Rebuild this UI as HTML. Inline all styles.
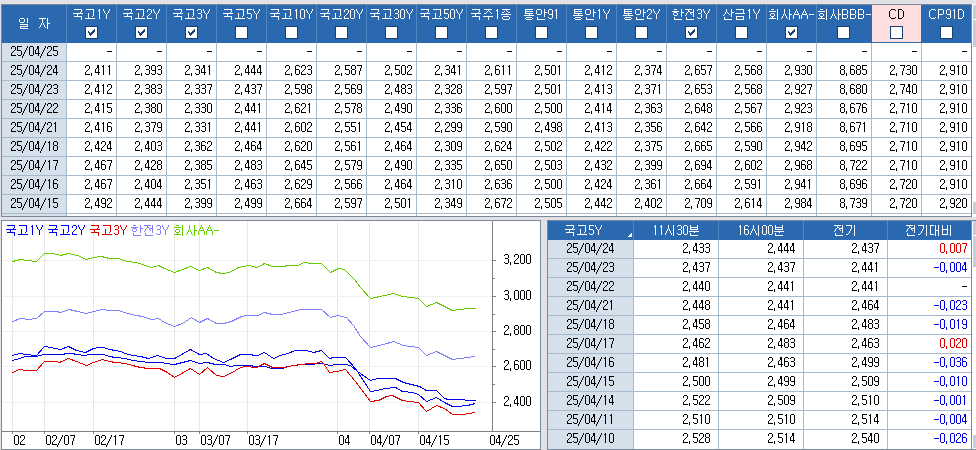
<!DOCTYPE html>
<html><head><meta charset="utf-8"><style>
html,body{margin:0;padding:0;width:976px;height:450px;overflow:hidden;background:#e2e2e6;}
body{position:relative;font-family:"Liberation Sans",sans-serif;}
body>div{position:absolute;}
.c{position:absolute;left:0;top:0;will-change:transform;}
.c b{position:absolute;font-weight:normal;font-size:14px;line-height:14px;text-align:center;white-space:nowrap;}
.c i{position:absolute;width:5px;height:1px;background:currentColor;}
</style></head><body>
<div style="left:1px;top:4px;width:971px;height:213px;background:#7b8a9a;"></div><div style="left:2px;top:5px;width:969px;height:211px;background:#ffffff;"></div><div style="left:2px;top:5px;width:969px;height:38px;background:#2a69b0;"></div><div style="left:2px;top:43px;width:64px;height:173px;background:#d6e0ea;"></div><div style="left:872px;top:5px;width:49px;height:37px;background:#fedfdf;"></div><div style="left:66px;top:5px;width:1px;height:38px;background:#5387c2;"></div><div style="left:116px;top:5px;width:1px;height:38px;background:#5387c2;"></div><div style="left:166px;top:5px;width:1px;height:38px;background:#5387c2;"></div><div style="left:216px;top:5px;width:1px;height:38px;background:#5387c2;"></div><div style="left:266px;top:5px;width:1px;height:38px;background:#5387c2;"></div><div style="left:316px;top:5px;width:1px;height:38px;background:#5387c2;"></div><div style="left:366px;top:5px;width:1px;height:38px;background:#5387c2;"></div><div style="left:416px;top:5px;width:1px;height:38px;background:#5387c2;"></div><div style="left:466px;top:5px;width:1px;height:38px;background:#5387c2;"></div><div style="left:516px;top:5px;width:1px;height:38px;background:#5387c2;"></div><div style="left:566px;top:5px;width:1px;height:38px;background:#5387c2;"></div><div style="left:616px;top:5px;width:1px;height:38px;background:#5387c2;"></div><div style="left:666px;top:5px;width:1px;height:38px;background:#5387c2;"></div><div style="left:716px;top:5px;width:1px;height:38px;background:#5387c2;"></div><div style="left:766px;top:5px;width:1px;height:38px;background:#5387c2;"></div><div style="left:816px;top:5px;width:1px;height:38px;background:#5387c2;"></div><div style="left:66px;top:43px;width:1px;height:173px;background:#a8bbcd;"></div><div style="left:116px;top:43px;width:1px;height:173px;background:#a8bbcd;"></div><div style="left:166px;top:43px;width:1px;height:173px;background:#a8bbcd;"></div><div style="left:216px;top:43px;width:1px;height:173px;background:#a8bbcd;"></div><div style="left:266px;top:43px;width:1px;height:173px;background:#a8bbcd;"></div><div style="left:316px;top:43px;width:1px;height:173px;background:#a8bbcd;"></div><div style="left:366px;top:43px;width:1px;height:173px;background:#a8bbcd;"></div><div style="left:416px;top:43px;width:1px;height:173px;background:#a8bbcd;"></div><div style="left:466px;top:43px;width:1px;height:173px;background:#a8bbcd;"></div><div style="left:516px;top:43px;width:1px;height:173px;background:#a8bbcd;"></div><div style="left:566px;top:43px;width:1px;height:173px;background:#a8bbcd;"></div><div style="left:616px;top:43px;width:1px;height:173px;background:#a8bbcd;"></div><div style="left:666px;top:43px;width:1px;height:173px;background:#a8bbcd;"></div><div style="left:716px;top:43px;width:1px;height:173px;background:#a8bbcd;"></div><div style="left:766px;top:43px;width:1px;height:173px;background:#a8bbcd;"></div><div style="left:816px;top:43px;width:1px;height:173px;background:#a8bbcd;"></div><div style="left:871px;top:43px;width:1px;height:173px;background:#a8bbcd;"></div><div style="left:921px;top:43px;width:1px;height:173px;background:#a8bbcd;"></div><div style="left:2px;top:61px;width:969px;height:1px;background:#a8bbcd;"></div><div style="left:2px;top:80px;width:969px;height:1px;background:#a8bbcd;"></div><div style="left:2px;top:99px;width:969px;height:1px;background:#a8bbcd;"></div><div style="left:2px;top:118px;width:969px;height:1px;background:#a8bbcd;"></div><div style="left:2px;top:137px;width:969px;height:1px;background:#a8bbcd;"></div><div style="left:2px;top:156px;width:969px;height:1px;background:#a8bbcd;"></div><div style="left:2px;top:175px;width:969px;height:1px;background:#a8bbcd;"></div><div style="left:2px;top:194px;width:969px;height:1px;background:#a8bbcd;"></div><div style="left:2px;top:213px;width:969px;height:1px;background:#a8bbcd;"></div><div style="left:85px;top:26px;width:11px;height:11px;border:1px solid #163f73;background:#fff"></div><svg style="position:absolute;left:85px;top:26px" width="13" height="13" shape-rendering="crispEdges"><path d="M3 5h1v2h-1zM4 6h1v3h-1zM5 7h1v3h-1zM6 6h1v3h-1zM7 5h1v3h-1zM8 4h1v3h-1zM9 3h1v3h-1z" fill="#163f73"/></svg><div style="left:135px;top:26px;width:11px;height:11px;border:1px solid #163f73;background:#fff"></div><svg style="position:absolute;left:135px;top:26px" width="13" height="13" shape-rendering="crispEdges"><path d="M3 5h1v2h-1zM4 6h1v3h-1zM5 7h1v3h-1zM6 6h1v3h-1zM7 5h1v3h-1zM8 4h1v3h-1zM9 3h1v3h-1z" fill="#163f73"/></svg><div style="left:185px;top:26px;width:11px;height:11px;border:1px solid #163f73;background:#fff"></div><svg style="position:absolute;left:185px;top:26px" width="13" height="13" shape-rendering="crispEdges"><path d="M3 5h1v2h-1zM4 6h1v3h-1zM5 7h1v3h-1zM6 6h1v3h-1zM7 5h1v3h-1zM8 4h1v3h-1zM9 3h1v3h-1z" fill="#163f73"/></svg><div style="left:235px;top:26px;width:11px;height:11px;border:1px solid #163f73;background:#fff"></div><div style="left:285px;top:26px;width:11px;height:11px;border:1px solid #163f73;background:#fff"></div><div style="left:335px;top:26px;width:11px;height:11px;border:1px solid #163f73;background:#fff"></div><div style="left:385px;top:26px;width:11px;height:11px;border:1px solid #163f73;background:#fff"></div><div style="left:435px;top:26px;width:11px;height:11px;border:1px solid #163f73;background:#fff"></div><div style="left:485px;top:26px;width:11px;height:11px;border:1px solid #163f73;background:#fff"></div><div style="left:535px;top:26px;width:11px;height:11px;border:1px solid #163f73;background:#fff"></div><div style="left:585px;top:26px;width:11px;height:11px;border:1px solid #163f73;background:#fff"></div><div style="left:635px;top:26px;width:11px;height:11px;border:1px solid #163f73;background:#fff"></div><div style="left:685px;top:26px;width:11px;height:11px;border:1px solid #163f73;background:#fff"></div><svg style="position:absolute;left:685px;top:26px" width="13" height="13" shape-rendering="crispEdges"><path d="M3 5h1v2h-1zM4 6h1v3h-1zM5 7h1v3h-1zM6 6h1v3h-1zM7 5h1v3h-1zM8 4h1v3h-1zM9 3h1v3h-1z" fill="#163f73"/></svg><div style="left:735px;top:26px;width:11px;height:11px;border:1px solid #163f73;background:#fff"></div><div style="left:785px;top:26px;width:11px;height:11px;border:1px solid #163f73;background:#fff"></div><svg style="position:absolute;left:785px;top:26px" width="13" height="13" shape-rendering="crispEdges"><path d="M3 5h1v2h-1zM4 6h1v3h-1zM5 7h1v3h-1zM6 6h1v3h-1zM7 5h1v3h-1zM8 4h1v3h-1zM9 3h1v3h-1z" fill="#163f73"/></svg><div style="left:837px;top:26px;width:11px;height:11px;border:1px solid #163f73;background:#fff"></div><div style="left:890px;top:26px;width:11px;height:11px;border:1px solid #163f73;background:#fff"></div><div style="left:940px;top:26px;width:11px;height:11px;border:1px solid #163f73;background:#fff"></div><svg style="position:absolute;left:0;top:0" width="976" height="450" shape-rendering="crispEdges"><path fill="#fff" d="M20 18h4v1h-4zM19 19h1v3h-1zM24 19h1v3h-1zM20 22h4v1h-4zM27 18h1v5h-1zM20 24h8v1h-8zM27 25h1v1h-1zM20 26h8v1h-8zM20 27h1v1h-1zM20 28h8v1h-8zM39 18h7v1h-7zM42 19h1v3h-1zM42 22h1v1h-1zM41 23h1v1h-1zM41 24h1v1h-1zM40 25h1v1h-1zM40 26h1v1h-1zM39 27h1v1h-1zM43 23h1v1h-1zM43 24h1v1h-1zM44 25h1v1h-1zM44 26h1v1h-1zM45 27h1v1h-1zM47 18h1v11h-1zM48 23h2v1h-2zM74 9h8v1h-8zM81 10h1v2h-1zM80 12h1v1h-1zM73 13h10v1h-10zM77 14h1v2h-1zM74 16h8v1h-8zM81 17h1v3h-1zM86 9h8v1h-8zM93 10h1v6h-1zM92 16h1v1h-1zM88 13h1v5h-1zM85 18h10v1h-10zM124 9h8v1h-8zM131 10h1v2h-1zM130 12h1v1h-1zM123 13h10v1h-10zM127 14h1v2h-1zM124 16h8v1h-8zM131 17h1v3h-1zM136 9h8v1h-8zM143 10h1v6h-1zM142 16h1v1h-1zM138 13h1v5h-1zM135 18h10v1h-10zM174 9h8v1h-8zM181 10h1v2h-1zM180 12h1v1h-1zM173 13h10v1h-10zM177 14h1v2h-1zM174 16h8v1h-8zM181 17h1v3h-1zM186 9h8v1h-8zM193 10h1v6h-1zM192 16h1v1h-1zM188 13h1v5h-1zM185 18h10v1h-10zM224 9h8v1h-8zM231 10h1v2h-1zM230 12h1v1h-1zM223 13h10v1h-10zM227 14h1v2h-1zM224 16h8v1h-8zM231 17h1v3h-1zM236 9h8v1h-8zM243 10h1v6h-1zM242 16h1v1h-1zM238 13h1v5h-1zM235 18h10v1h-10zM271 9h8v1h-8zM278 10h1v2h-1zM277 12h1v1h-1zM270 13h10v1h-10zM274 14h1v2h-1zM271 16h8v1h-8zM278 17h1v3h-1zM283 9h8v1h-8zM290 10h1v6h-1zM289 16h1v1h-1zM285 13h1v5h-1zM282 18h10v1h-10zM321 9h8v1h-8zM328 10h1v2h-1zM327 12h1v1h-1zM320 13h10v1h-10zM324 14h1v2h-1zM321 16h8v1h-8zM328 17h1v3h-1zM333 9h8v1h-8zM340 10h1v6h-1zM339 16h1v1h-1zM335 13h1v5h-1zM332 18h10v1h-10zM371 9h8v1h-8zM378 10h1v2h-1zM377 12h1v1h-1zM370 13h10v1h-10zM374 14h1v2h-1zM371 16h8v1h-8zM378 17h1v3h-1zM383 9h8v1h-8zM390 10h1v6h-1zM389 16h1v1h-1zM385 13h1v5h-1zM382 18h10v1h-10zM421 9h8v1h-8zM428 10h1v2h-1zM427 12h1v1h-1zM420 13h10v1h-10zM424 14h1v2h-1zM421 16h8v1h-8zM428 17h1v3h-1zM433 9h8v1h-8zM440 10h1v6h-1zM439 16h1v1h-1zM435 13h1v5h-1zM432 18h10v1h-10zM472 9h8v1h-8zM479 10h1v2h-1zM478 12h1v1h-1zM471 13h10v1h-10zM475 14h1v2h-1zM472 16h8v1h-8zM479 17h1v3h-1zM484 9h8v1h-8zM488 10h1v1h-1zM487 11h1v1h-1zM486 12h1v1h-1zM485 13h1v1h-1zM484 13h1v1h-1zM489 11h1v1h-1zM490 12h1v1h-1zM491 13h1v1h-1zM483 16h10v1h-10zM488 17h1v3h-1zM502 9h8v1h-8zM506 10h1v1h-1zM504 11h1v1h-1zM503 12h1v1h-1zM502 12h1v1h-1zM507 11h1v1h-1zM508 12h1v1h-1zM509 12h1v1h-1zM506 13h1v1h-1zM501 14h10v1h-10zM503 16h6v1h-6zM502 17h1v2h-1zM509 17h1v2h-1zM503 19h6v1h-6zM525 9h8v1h-8zM525 10h1v4h-1zM526 11h7v1h-7zM526 13h7v1h-7zM529 14h1v1h-1zM524 15h10v1h-10zM526 17h6v1h-6zM525 18h1v1h-1zM532 18h1v1h-1zM526 19h6v1h-6zM537 9h4v1h-4zM536 10h1v4h-1zM541 10h1v4h-1zM537 14h4v1h-4zM544 9h1v8h-1zM545 12h2v1h-2zM537 17h1v2h-1zM537 19h8v1h-8zM574 9h8v1h-8zM574 10h1v4h-1zM575 11h7v1h-7zM575 13h7v1h-7zM578 14h1v1h-1zM573 15h10v1h-10zM575 17h6v1h-6zM574 18h1v1h-1zM581 18h1v1h-1zM575 19h6v1h-6zM586 9h4v1h-4zM585 10h1v4h-1zM590 10h1v4h-1zM586 14h4v1h-4zM593 9h1v8h-1zM594 12h2v1h-2zM586 17h1v2h-1zM586 19h8v1h-8zM624 9h8v1h-8zM624 10h1v4h-1zM625 11h7v1h-7zM625 13h7v1h-7zM628 14h1v1h-1zM623 15h10v1h-10zM625 17h6v1h-6zM624 18h1v1h-1zM631 18h1v1h-1zM625 19h6v1h-6zM636 9h4v1h-4zM635 10h1v4h-1zM640 10h1v4h-1zM636 14h4v1h-4zM643 9h1v8h-1zM644 12h2v1h-2zM636 17h1v2h-1zM636 19h8v1h-8zM674 9h3v1h-3zM672 11h7v1h-7zM674 12h3v1h-3zM673 13h1v2h-1zM677 13h1v2h-1zM674 15h3v1h-3zM681 9h1v8h-1zM682 12h2v1h-2zM674 17h1v2h-1zM674 19h8v1h-8zM685 9h7v1h-7zM688 10h1v1h-1zM688 11h1v1h-1zM687 12h1v1h-1zM686 13h1v1h-1zM686 14h1v1h-1zM685 15h1v1h-1zM689 11h1v1h-1zM690 12h1v1h-1zM690 13h1v1h-1zM691 14h1v1h-1zM693 9h1v8h-1zM691 12h2v1h-2zM686 17h1v2h-1zM686 19h8v1h-8zM726 9h1v3h-1zM725 12h1v1h-1zM725 13h1v1h-1zM724 14h1v1h-1zM723 15h1v1h-1zM727 12h1v1h-1zM728 13h1v1h-1zM729 14h1v1h-1zM731 9h1v8h-1zM732 12h2v1h-2zM724 17h1v2h-1zM724 19h8v1h-8zM736 9h8v1h-8zM743 10h1v3h-1zM735 13h10v1h-10zM736 16h8v1h-8zM736 17h1v2h-1zM743 17h1v2h-1zM736 19h8v1h-8zM771 9h3v1h-3zM769 11h7v1h-7zM771 13h3v1h-3zM770 14h1v2h-1zM774 14h1v2h-1zM771 16h3v1h-3zM772 17h1v1h-1zM769 18h7v1h-7zM777 9h1v11h-1zM784 9h1v5h-1zM783 14h1v1h-1zM783 15h1v1h-1zM782 16h1v1h-1zM782 17h1v1h-1zM781 18h1v1h-1zM785 14h1v1h-1zM785 15h1v1h-1zM786 16h1v1h-1zM786 17h1v1h-1zM787 18h1v1h-1zM789 9h1v11h-1zM790 14h2v1h-2zM820 9h3v1h-3zM818 11h7v1h-7zM820 13h3v1h-3zM819 14h1v2h-1zM823 14h1v2h-1zM820 16h3v1h-3zM821 17h1v1h-1zM818 18h7v1h-7zM826 9h1v11h-1zM833 9h1v5h-1zM832 14h1v1h-1zM832 15h1v1h-1zM831 16h1v1h-1zM831 17h1v1h-1zM830 18h1v1h-1zM834 14h1v1h-1zM834 15h1v1h-1zM835 16h1v1h-1zM835 17h1v1h-1zM836 18h1v1h-1zM838 9h1v11h-1zM839 14h2v1h-2z"/></svg><div style="left:972px;top:4px;width:4px;height:213px;background:#ffffff;"></div><div style="left:973px;top:5px;width:3px;height:14px;background:#c5cfdb;"></div><div style="left:973px;top:20px;width:3px;height:27px;background:#c5cfdb;"></div><div style="left:973px;top:202px;width:3px;height:12px;background:#c5cfdb;"></div><div style="left:1px;top:220px;width:540px;height:230px;background:#7b8a9a;"></div><div style="left:2px;top:221px;width:538px;height:228px;background:#ffffff;"></div><svg style="position:absolute;left:0;top:0" width="976" height="450" shape-rendering="crispEdges"><line x1="12.5" y1="221" x2="12.5" y2="431" stroke="#e8e8e8" stroke-width="1"/><line x1="44.5" y1="221" x2="44.5" y2="431" stroke="#e8e8e8" stroke-width="1"/><line x1="93.5" y1="221" x2="93.5" y2="431" stroke="#e8e8e8" stroke-width="1"/><line x1="174.5" y1="221" x2="174.5" y2="431" stroke="#e8e8e8" stroke-width="1"/><line x1="199.5" y1="221" x2="199.5" y2="431" stroke="#e8e8e8" stroke-width="1"/><line x1="247.5" y1="221" x2="247.5" y2="431" stroke="#e8e8e8" stroke-width="1"/><line x1="337.5" y1="221" x2="337.5" y2="431" stroke="#e8e8e8" stroke-width="1"/><line x1="369.5" y1="221" x2="369.5" y2="431" stroke="#e8e8e8" stroke-width="1"/><line x1="418.5" y1="221" x2="418.5" y2="431" stroke="#e8e8e8" stroke-width="1"/><line x1="3" y1="260.5" x2="492" y2="260.5" stroke="#e2e2e2" stroke-width="1" stroke-dasharray="1 1"/><line x1="3" y1="296.5" x2="492" y2="296.5" stroke="#e2e2e2" stroke-width="1" stroke-dasharray="1 1"/><line x1="3" y1="331.5" x2="492" y2="331.5" stroke="#e2e2e2" stroke-width="1" stroke-dasharray="1 1"/><line x1="3" y1="366.5" x2="492" y2="366.5" stroke="#e2e2e2" stroke-width="1" stroke-dasharray="1 1"/><line x1="3" y1="402.5" x2="492" y2="402.5" stroke="#e2e2e2" stroke-width="1" stroke-dasharray="1 1"/><line x1="492.5" y1="221" x2="492.5" y2="431" stroke="#808080" stroke-width="1"/><line x1="2" y1="431.5" x2="540" y2="431.5" stroke="#808080" stroke-width="1"/><line x1="493" y1="260.5" x2="496" y2="260.5" stroke="#808080" stroke-width="1"/><line x1="493" y1="296.5" x2="496" y2="296.5" stroke="#808080" stroke-width="1"/><line x1="493" y1="331.5" x2="496" y2="331.5" stroke="#808080" stroke-width="1"/><line x1="493" y1="366.5" x2="496" y2="366.5" stroke="#808080" stroke-width="1"/><line x1="493" y1="402.5" x2="496" y2="402.5" stroke="#808080" stroke-width="1"/><line x1="493" y1="278.5" x2="495" y2="278.5" stroke="#808080" stroke-width="1"/><line x1="493" y1="314.5" x2="495" y2="314.5" stroke="#808080" stroke-width="1"/><line x1="493" y1="349.5" x2="495" y2="349.5" stroke="#808080" stroke-width="1"/><line x1="493" y1="384.5" x2="495" y2="384.5" stroke="#808080" stroke-width="1"/><line x1="12.5" y1="432" x2="12.5" y2="434" stroke="#808080" stroke-width="1"/><line x1="44.5" y1="432" x2="44.5" y2="434" stroke="#808080" stroke-width="1"/><line x1="93.5" y1="432" x2="93.5" y2="434" stroke="#808080" stroke-width="1"/><line x1="174.5" y1="432" x2="174.5" y2="434" stroke="#808080" stroke-width="1"/><line x1="199.5" y1="432" x2="199.5" y2="434" stroke="#808080" stroke-width="1"/><line x1="247.5" y1="432" x2="247.5" y2="434" stroke="#808080" stroke-width="1"/><line x1="337.5" y1="432" x2="337.5" y2="434" stroke="#808080" stroke-width="1"/><line x1="369.5" y1="432" x2="369.5" y2="434" stroke="#808080" stroke-width="1"/><line x1="418.5" y1="432" x2="418.5" y2="434" stroke="#808080" stroke-width="1"/><polyline points="12.5,321.5 20.5,318.5 28.5,319.5 36.5,318.5 44.5,311.5 56.5,311.5 60.5,312.5 69.5,309.5 77.5,311.5 86.5,313.5 93.5,311.5 102.5,309.5 109.5,310.5 118.5,310.5 127.5,313.5 136.5,315.5 142.5,316.5 151.5,319.5 158.5,318.5 164.5,322.5 174.5,326.5 182.5,323.5 191.5,317.5 199.5,322.5 207.5,318.5 216.5,323.5 223.5,323.5 231.5,321.5 241.5,316.5 247.5,315.5 257.5,315.5 264.5,312.5 272.5,314.5 281.5,314.5 292.5,311.5 301.5,309.5 321.5,309.5 330.5,317.5 337.5,315.5 346.5,317.5 353.5,325.5 360.5,336.5 370.5,347.5 383.5,344.5 393.5,341.5 403.5,345.5 418.5,347.5 426.5,355.5 436.5,351.5 444.5,355.5 452.5,359.5 460.5,358.5 467.5,357.5 475.5,356.5" fill="none" stroke="#8080ff" stroke-width="1" shape-rendering="crispEdges"/><polyline points="12.5,261.5 20.5,259.5 27.5,260.5 36.5,261.5 44.5,253.5 53.5,253.5 60.5,255.5 68.5,253.5 77.5,255.5 86.5,259.5 93.5,257.5 101.5,256.5 109.5,258.5 118.5,258.5 127.5,261.5 136.5,262.5 142.5,264.5 151.5,267.5 158.5,265.5 164.5,268.5 174.5,272.5 182.5,269.5 190.5,266.5 199.5,270.5 207.5,267.5 216.5,272.5 222.5,273.5 229.5,272.5 238.5,267.5 248.5,265.5 257.5,267.5 264.5,263.5 272.5,266.5 282.5,266.5 288.5,265.5 297.5,265.5 304.5,262.5 311.5,263.5 321.5,263.5 330.5,272.5 338.5,268.5 344.5,269.5 354.5,279.5 360.5,287.5 370.5,298.5 384.5,295.5 393.5,293.5 402.5,296.5 418.5,298.5 426.5,306.5 436.5,302.5 444.5,306.5 452.5,310.5 460.5,309.5 467.5,308.5 475.5,308.5" fill="none" stroke="#66cc00" stroke-width="1" shape-rendering="crispEdges"/><polyline points="12.5,360.5 19.5,358.5 25.5,356.5 36.5,356.5 43.5,354.5 63.5,354.5 65.5,353.5 72.5,353.5 76.5,354.5 84.5,355.5 90.5,354.5 103.5,354.5 109.5,356.5 115.5,357.5 125.5,358.5 132.5,360.5 140.5,361.5 148.5,362.5 162.5,362.5 165.5,363.5 174.5,364.5 182.5,362.5 190.5,360.5 199.5,363.5 207.5,362.5 215.5,364.5 224.5,364.5 230.5,366.5 236.5,365.5 251.5,365.5 253.5,366.5 265.5,366.5 271.5,368.5 282.5,368.5 287.5,366.5 294.5,365.5 301.5,364.5 307.5,364.5 322.5,363.5 329.5,365.5 336.5,364.5 345.5,364.5 350.5,365.5 357.5,371.5 370.5,380.5 377.5,378.5 395.5,378.5 403.5,382.5 411.5,384.5 419.5,386.5 426.5,390.5 436.5,390.5 444.5,398.5 448.5,399.5 464.5,399.5 465.5,400.5 475.5,400.5" fill="none" stroke="#0000e0" stroke-width="1" shape-rendering="crispEdges"/><polyline points="12.5,355.5 19.5,353.5 25.5,354.5 36.5,355.5 44.5,346.5 50.5,347.5 60.5,349.5 68.5,346.5 76.5,350.5 85.5,352.5 93.5,348.5 99.5,347.5 103.5,347.5 109.5,349.5 115.5,350.5 120.5,351.5 125.5,353.5 132.5,355.5 140.5,356.5 148.5,358.5 157.5,355.5 166.5,358.5 174.5,358.5 190.5,349.5 199.5,354.5 206.5,353.5 213.5,358.5 223.5,362.5 230.5,359.5 240.5,354.5 251.5,354.5 253.5,355.5 257.5,355.5 264.5,352.5 273.5,358.5 280.5,355.5 287.5,353.5 295.5,350.5 306.5,350.5 313.5,352.5 321.5,350.5 329.5,358.5 333.5,357.5 345.5,357.5 355.5,368.5 370.5,391.5 377.5,390.5 384.5,388.5 395.5,387.5 402.5,391.5 412.5,392.5 418.5,394.5 426.5,401.5 436.5,397.5 444.5,402.5 452.5,406.5 456.5,406.5 467.5,405.5 475.5,403.5" fill="none" stroke="#0000ff" stroke-width="1" shape-rendering="crispEdges"/><polyline points="12.5,372.5 19.5,369.5 26.5,370.5 36.5,370.5 44.5,361.5 56.5,361.5 59.5,362.5 68.5,358.5 76.5,361.5 86.5,365.5 93.5,362.5 102.5,359.5 109.5,361.5 115.5,362.5 125.5,363.5 132.5,365.5 140.5,367.5 148.5,368.5 159.5,368.5 167.5,372.5 174.5,377.5 190.5,368.5 199.5,374.5 207.5,367.5 216.5,375.5 223.5,376.5 230.5,373.5 240.5,367.5 245.5,366.5 256.5,367.5 264.5,363.5 272.5,367.5 284.5,367.5 293.5,365.5 301.5,364.5 308.5,363.5 315.5,363.5 321.5,361.5 323.5,363.5 329.5,372.5 336.5,371.5 345.5,369.5 355.5,381.5 370.5,401.5 378.5,400.5 386.5,396.5 392.5,395.5 402.5,400.5 408.5,401.5 418.5,402.5 426.5,411.5 436.5,405.5 444.5,408.5 452.5,414.5 462.5,414.5 475.5,412.5" fill="none" stroke="#e00000" stroke-width="1" shape-rendering="crispEdges"/></svg><svg style="position:absolute;left:0;top:0" width="976" height="450" shape-rendering="crispEdges"><path fill="#0000f0" d="M7 225h8v1h-8zM14 226h1v2h-1zM13 228h1v1h-1zM6 229h10v1h-10zM10 230h1v2h-1zM7 232h8v1h-8zM14 233h1v3h-1zM19 225h8v1h-8zM26 226h1v6h-1zM25 232h1v1h-1zM21 229h1v5h-1zM18 234h10v1h-10z"/><path fill="#0000ff" d="M49 225h8v1h-8zM56 226h1v2h-1zM55 228h1v1h-1zM48 229h10v1h-10zM52 230h1v2h-1zM49 232h8v1h-8zM56 233h1v3h-1zM61 225h8v1h-8zM68 226h1v6h-1zM67 232h1v1h-1zM63 229h1v5h-1zM60 234h10v1h-10z"/><path fill="#e00000" d="M91 225h8v1h-8zM98 226h1v2h-1zM97 228h1v1h-1zM90 229h10v1h-10zM94 230h1v2h-1zM91 232h8v1h-8zM98 233h1v3h-1zM103 225h8v1h-8zM110 226h1v6h-1zM109 232h1v1h-1zM105 229h1v5h-1zM102 234h10v1h-10z"/><path fill="#8080ff" d="M133 225h3v1h-3zM131 227h7v1h-7zM133 228h3v1h-3zM132 229h1v2h-1zM136 229h1v2h-1zM133 231h3v1h-3zM140 225h1v8h-1zM141 228h2v1h-2zM133 233h1v2h-1zM133 235h8v1h-8zM144 225h7v1h-7zM147 226h1v1h-1zM147 227h1v1h-1zM146 228h1v1h-1zM145 229h1v1h-1zM145 230h1v1h-1zM144 231h1v1h-1zM148 227h1v1h-1zM149 228h1v1h-1zM149 229h1v1h-1zM150 230h1v1h-1zM152 225h1v8h-1zM150 228h2v1h-2zM145 233h1v2h-1zM145 235h8v1h-8z"/><path fill="#66cc00" d="M176 225h3v1h-3zM174 227h7v1h-7zM176 229h3v1h-3zM175 230h1v2h-1zM179 230h1v2h-1zM176 232h3v1h-3zM177 233h1v1h-1zM174 234h7v1h-7zM182 225h1v11h-1zM189 225h1v5h-1zM188 230h1v1h-1zM188 231h1v1h-1zM187 232h1v1h-1zM187 233h1v1h-1zM186 234h1v1h-1zM190 230h1v1h-1zM190 231h1v1h-1zM191 232h1v1h-1zM191 233h1v1h-1zM192 234h1v1h-1zM194 225h1v11h-1zM195 230h2v1h-2z"/></svg><div style="left:547px;top:220px;width:429px;height:230px;background:#7b8a9a;"></div><div style="left:548px;top:221px;width:428px;height:228px;background:#ffffff;"></div><div style="left:548px;top:221px;width:424px;height:19px;background:#2a69b0;"></div><div style="left:548px;top:240px;width:85px;height:209px;background:#d6e0ea;"></div><div style="left:633px;top:221px;width:1px;height:19px;background:#5387c2;"></div><div style="left:633px;top:240px;width:1px;height:209px;background:#a8bbcd;"></div><div style="left:718px;top:221px;width:1px;height:19px;background:#5387c2;"></div><div style="left:718px;top:240px;width:1px;height:209px;background:#a8bbcd;"></div><div style="left:803px;top:221px;width:1px;height:19px;background:#5387c2;"></div><div style="left:803px;top:240px;width:1px;height:209px;background:#a8bbcd;"></div><div style="left:887px;top:221px;width:1px;height:19px;background:#5387c2;"></div><div style="left:887px;top:240px;width:1px;height:209px;background:#a8bbcd;"></div><div style="left:971px;top:221px;width:1px;height:228px;background:#7b8a9a;"></div><div style="left:548px;top:258px;width:423px;height:1px;background:#a8bbcd;"></div><div style="left:548px;top:277px;width:423px;height:1px;background:#a8bbcd;"></div><div style="left:548px;top:296px;width:423px;height:1px;background:#a8bbcd;"></div><div style="left:548px;top:315px;width:423px;height:1px;background:#a8bbcd;"></div><div style="left:548px;top:334px;width:423px;height:1px;background:#a8bbcd;"></div><div style="left:548px;top:353px;width:423px;height:1px;background:#a8bbcd;"></div><div style="left:548px;top:372px;width:423px;height:1px;background:#a8bbcd;"></div><div style="left:548px;top:391px;width:423px;height:1px;background:#a8bbcd;"></div><div style="left:548px;top:410px;width:423px;height:1px;background:#a8bbcd;"></div><div style="left:548px;top:429px;width:423px;height:1px;background:#a8bbcd;"></div><svg style="position:absolute;left:0;top:0" width="976" height="450" shape-rendering="crispEdges"><path fill="#fff" d="M566 225h8v1h-8zM573 226h1v2h-1zM572 228h1v1h-1zM565 229h10v1h-10zM569 230h1v2h-1zM566 232h8v1h-8zM573 233h1v3h-1zM578 225h8v1h-8zM585 226h1v6h-1zM584 232h1v1h-1zM580 229h1v5h-1zM577 234h10v1h-10zM668 225h1v4h-1zM667 229h1v1h-1zM667 230h1v1h-1zM666 231h1v1h-1zM666 232h1v1h-1zM665 233h1v1h-1zM665 234h1v1h-1zM669 229h1v1h-1zM669 230h1v1h-1zM670 231h1v1h-1zM670 232h1v1h-1zM671 233h1v1h-1zM671 234h1v1h-1zM673 225h1v11h-1zM690 225h1v5h-1zM697 225h1v5h-1zM691 227h6v1h-6zM691 229h6v1h-6zM689 231h10v1h-10zM694 232h1v1h-1zM690 233h1v2h-1zM690 235h8v1h-8zM753 225h1v4h-1zM752 229h1v1h-1zM752 230h1v1h-1zM751 231h1v1h-1zM751 232h1v1h-1zM750 233h1v1h-1zM750 234h1v1h-1zM754 229h1v1h-1zM754 230h1v1h-1zM755 231h1v1h-1zM755 232h1v1h-1zM756 233h1v1h-1zM756 234h1v1h-1zM758 225h1v11h-1zM775 225h1v5h-1zM782 225h1v5h-1zM776 227h6v1h-6zM776 229h6v1h-6zM774 231h10v1h-10zM779 232h1v1h-1zM775 233h1v2h-1zM775 235h8v1h-8zM834 225h7v1h-7zM837 226h1v1h-1zM837 227h1v1h-1zM836 228h1v1h-1zM835 229h1v1h-1zM835 230h1v1h-1zM834 231h1v1h-1zM838 227h1v1h-1zM839 228h1v1h-1zM839 229h1v1h-1zM840 230h1v1h-1zM842 225h1v8h-1zM840 228h2v1h-2zM835 233h1v2h-1zM835 235h8v1h-8zM846 225h6v1h-6zM851 226h1v3h-1zM850 229h1v1h-1zM850 230h1v1h-1zM849 231h1v1h-1zM849 232h1v1h-1zM848 233h1v1h-1zM847 234h1v1h-1zM846 234h1v1h-1zM854 225h1v11h-1zM906 225h7v1h-7zM909 226h1v1h-1zM909 227h1v1h-1zM908 228h1v1h-1zM907 229h1v1h-1zM907 230h1v1h-1zM906 231h1v1h-1zM910 227h1v1h-1zM911 228h1v1h-1zM911 229h1v1h-1zM912 230h1v1h-1zM914 225h1v8h-1zM912 228h2v1h-2zM907 233h1v2h-1zM907 235h8v1h-8zM918 225h6v1h-6zM923 226h1v3h-1zM922 229h1v1h-1zM922 230h1v1h-1zM921 231h1v1h-1zM921 232h1v1h-1zM920 233h1v1h-1zM919 234h1v1h-1zM918 234h1v1h-1zM926 225h1v11h-1zM930 225h4v1h-4zM930 226h1v8h-1zM930 234h4v1h-4zM935 225h1v11h-1zM936 230h2v1h-2zM938 225h1v11h-1zM942 225h1v10h-1zM947 225h1v10h-1zM943 229h4v1h-4zM943 234h4v1h-4zM950 225h1v11h-1z"/></svg><div style="left:631px;top:233px;width:1px;height:1px;background:#fff;"></div><div style="left:630px;top:234px;width:2px;height:1px;background:#fff;"></div><div style="left:629px;top:235px;width:3px;height:1px;background:#fff;"></div><div style="left:628px;top:236px;width:4px;height:1px;background:#fff;"></div><div style="left:972px;top:221px;width:4px;height:228px;background:#ffffff;"></div><div style="left:973px;top:221px;width:3px;height:14px;background:#c5cfdb;"></div><div style="left:973px;top:435px;width:3px;height:13px;background:#c5cfdb;"></div><div style="left:973px;top:236px;width:3px;height:31px;background:#c5cfdb;"></div><svg style="position:absolute;left:0;top:0" width="976" height="450" shape-rendering="crispEdges"><defs><path id="p0" d="M2 0h3v1h-3zM1 1h1v1h-1zM5 1h1v1h-1zM1 2h1v1h-1zM5 2h1v1h-1zM1 3h1v1h-1zM5 3h1v1h-1zM1 4h1v1h-1zM5 4h1v1h-1zM1 5h1v1h-1zM5 5h1v1h-1zM1 6h1v1h-1zM5 6h1v1h-1zM1 7h1v1h-1zM5 7h1v1h-1zM1 8h1v1h-1zM5 8h1v1h-1zM2 9h3v1h-3z"/><path id="p1" d="M3 0h1v1h-1zM2 1h2v1h-2zM3 2h1v1h-1zM3 3h1v1h-1zM3 4h1v1h-1zM3 5h1v1h-1zM3 6h1v1h-1zM3 7h1v1h-1zM3 8h1v1h-1zM3 9h1v1h-1z"/><path id="p2" d="M2 0h3v1h-3zM1 1h1v1h-1zM5 1h1v1h-1zM1 2h1v1h-1zM5 2h1v1h-1zM5 3h1v1h-1zM4 4h1v1h-1zM3 5h1v1h-1zM2 6h1v1h-1zM1 7h1v1h-1zM1 8h1v1h-1zM1 9h5v1h-5z"/><path id="p3" d="M2 0h3v1h-3zM1 1h1v1h-1zM5 1h1v1h-1zM5 2h1v1h-1zM5 3h1v1h-1zM2 4h3v1h-3zM5 5h1v1h-1zM5 6h1v1h-1zM5 7h1v1h-1zM1 8h1v1h-1zM5 8h1v1h-1zM2 9h3v1h-3z"/><path id="p4" d="M3 0h2v1h-2zM3 1h2v1h-2zM3 2h2v1h-2zM2 3h1v1h-1zM4 3h1v1h-1zM1 4h1v1h-1zM4 4h1v1h-1zM1 5h1v1h-1zM4 5h1v1h-1zM1 6h1v1h-1zM4 6h1v1h-1zM1 7h5v1h-5zM4 8h1v1h-1zM4 9h1v1h-1z"/><path id="p5" d="M1 0h5v1h-5zM1 1h1v1h-1zM1 2h1v1h-1zM1 3h1v1h-1zM1 4h4v1h-4zM5 5h1v1h-1zM5 6h1v1h-1zM5 7h1v1h-1zM1 8h1v1h-1zM5 8h1v1h-1zM2 9h3v1h-3z"/><path id="p6" d="M2 0h3v1h-3zM1 1h1v1h-1zM5 1h1v1h-1zM1 2h1v1h-1zM1 3h1v1h-1zM1 4h4v1h-4zM1 5h1v1h-1zM5 5h1v1h-1zM1 6h1v1h-1zM5 6h1v1h-1zM1 7h1v1h-1zM5 7h1v1h-1zM1 8h1v1h-1zM5 8h1v1h-1zM2 9h3v1h-3z"/><path id="p7" d="M1 0h5v1h-5zM5 1h1v1h-1zM5 2h1v1h-1zM4 3h1v1h-1zM4 4h1v1h-1zM4 5h1v1h-1zM3 6h1v1h-1zM3 7h1v1h-1zM3 8h1v1h-1zM3 9h1v1h-1z"/><path id="p8" d="M2 0h3v1h-3zM1 1h1v1h-1zM5 1h1v1h-1zM1 2h1v1h-1zM5 2h1v1h-1zM1 3h1v1h-1zM5 3h1v1h-1zM2 4h3v1h-3zM1 5h1v1h-1zM5 5h1v1h-1zM1 6h1v1h-1zM5 6h1v1h-1zM1 7h1v1h-1zM5 7h1v1h-1zM1 8h1v1h-1zM5 8h1v1h-1zM2 9h3v1h-3z"/><path id="p9" d="M2 0h3v1h-3zM1 1h1v1h-1zM5 1h1v1h-1zM1 2h1v1h-1zM5 2h1v1h-1zM1 3h1v1h-1zM5 3h1v1h-1zM1 4h1v1h-1zM5 4h1v1h-1zM2 5h4v1h-4zM5 6h1v1h-1zM5 7h1v1h-1zM1 8h1v1h-1zM5 8h1v1h-1zM2 9h3v1h-3z"/><path id="pcm" d="M1 8h1v1h-1zM1 9h1v1h-1zM1 10h1v1h-1z"/><path id="psl" d="M5 0h1v1h-1zM5 1h1v1h-1zM4 2h1v1h-1zM4 3h1v1h-1zM3 4h1v1h-1zM3 5h1v1h-1zM2 6h1v1h-1zM2 7h1v1h-1zM1 8h1v1h-1zM1 9h1v1h-1zM0 10h1v1h-1zM0 11h1v1h-1z"/><path id="pda" d="M1 5h5v1h-5z"/><path id="pA" d="M4 0h1v1h-1zM4 1h1v1h-1zM3 2h1v1h-1zM5 2h1v1h-1zM3 3h1v1h-1zM5 3h1v1h-1zM2 4h1v1h-1zM6 4h1v1h-1zM2 5h5v1h-5zM1 6h1v1h-1zM7 6h1v1h-1zM1 7h1v1h-1zM7 7h1v1h-1zM1 8h1v1h-1zM7 8h1v1h-1zM1 9h1v1h-1zM7 9h1v1h-1z"/><path id="pB" d="M1 0h5v1h-5zM1 1h1v1h-1zM6 1h1v1h-1zM1 2h1v1h-1zM6 2h1v1h-1zM1 3h1v1h-1zM6 3h1v1h-1zM1 4h1v1h-1zM6 4h1v1h-1zM1 5h5v1h-5zM1 6h1v1h-1zM6 6h1v1h-1zM1 7h1v1h-1zM6 7h1v1h-1zM1 8h1v1h-1zM6 8h1v1h-1zM1 9h5v1h-5z"/><path id="pC" d="M3 0h4v1h-4zM2 1h1v1h-1zM7 1h1v1h-1zM1 2h1v1h-1zM1 3h1v1h-1zM1 4h1v1h-1zM1 5h1v1h-1zM1 6h1v1h-1zM1 7h1v1h-1zM2 8h1v1h-1zM7 8h1v1h-1zM3 9h4v1h-4z"/><path id="pD" d="M1 0h4v1h-4zM1 1h1v1h-1zM5 1h1v1h-1zM1 2h1v1h-1zM6 2h1v1h-1zM1 3h1v1h-1zM6 3h1v1h-1zM1 4h1v1h-1zM6 4h1v1h-1zM1 5h1v1h-1zM6 5h1v1h-1zM1 6h1v1h-1zM6 6h1v1h-1zM1 7h1v1h-1zM6 7h1v1h-1zM1 8h1v1h-1zM5 8h1v1h-1zM1 9h4v1h-4z"/><path id="pP" d="M1 0h5v1h-5zM1 1h1v1h-1zM6 1h1v1h-1zM1 2h1v1h-1zM6 2h1v1h-1zM1 3h1v1h-1zM6 3h1v1h-1zM1 4h1v1h-1zM6 4h1v1h-1zM1 5h5v1h-5zM1 6h1v1h-1zM1 7h1v1h-1zM1 8h1v1h-1zM1 9h1v1h-1z"/><path id="pY" d="M1 0h1v1h-1zM7 0h1v1h-1zM1 1h1v1h-1zM7 1h1v1h-1zM2 2h1v1h-1zM6 2h1v1h-1zM2 3h1v1h-1zM6 3h1v1h-1zM3 4h1v1h-1zM5 4h1v1h-1zM4 5h1v1h-1zM4 6h1v1h-1zM4 7h1v1h-1zM4 8h1v1h-1zM4 9h1v1h-1z"/></defs><g fill="#000"><use href="#p2" x="10" y="46"/><use href="#p5" x="16" y="46"/><use href="#psl" x="22" y="46"/><use href="#p0" x="28" y="46"/><use href="#p4" x="34" y="46"/><use href="#psl" x="40" y="46"/><use href="#p2" x="46" y="46"/><use href="#p5" x="52" y="46"/><use href="#pda" x="106" y="46"/><use href="#pda" x="156" y="46"/><use href="#pda" x="206" y="46"/><use href="#pda" x="256" y="46"/><use href="#pda" x="306" y="46"/><use href="#pda" x="356" y="46"/><use href="#pda" x="406" y="46"/><use href="#pda" x="456" y="46"/><use href="#pda" x="506" y="46"/><use href="#pda" x="556" y="46"/><use href="#pda" x="606" y="46"/><use href="#pda" x="656" y="46"/><use href="#pda" x="706" y="46"/><use href="#pda" x="756" y="46"/><use href="#pda" x="806" y="46"/><use href="#pda" x="861" y="46"/><use href="#pda" x="911" y="46"/><use href="#pda" x="961" y="46"/><use href="#p2" x="10" y="65"/><use href="#p5" x="16" y="65"/><use href="#psl" x="22" y="65"/><use href="#p0" x="28" y="65"/><use href="#p4" x="34" y="65"/><use href="#psl" x="40" y="65"/><use href="#p2" x="46" y="65"/><use href="#p4" x="52" y="65"/><use href="#p2" x="84" y="65"/><use href="#pcm" x="90" y="65"/><use href="#p4" x="94" y="65"/><use href="#p1" x="100" y="65"/><use href="#p1" x="106" y="65"/><use href="#p2" x="134" y="65"/><use href="#pcm" x="140" y="65"/><use href="#p3" x="144" y="65"/><use href="#p9" x="150" y="65"/><use href="#p3" x="156" y="65"/><use href="#p2" x="184" y="65"/><use href="#pcm" x="190" y="65"/><use href="#p3" x="194" y="65"/><use href="#p4" x="200" y="65"/><use href="#p1" x="206" y="65"/><use href="#p2" x="234" y="65"/><use href="#pcm" x="240" y="65"/><use href="#p4" x="244" y="65"/><use href="#p4" x="250" y="65"/><use href="#p4" x="256" y="65"/><use href="#p2" x="284" y="65"/><use href="#pcm" x="290" y="65"/><use href="#p6" x="294" y="65"/><use href="#p2" x="300" y="65"/><use href="#p3" x="306" y="65"/><use href="#p2" x="334" y="65"/><use href="#pcm" x="340" y="65"/><use href="#p5" x="344" y="65"/><use href="#p8" x="350" y="65"/><use href="#p7" x="356" y="65"/><use href="#p2" x="384" y="65"/><use href="#pcm" x="390" y="65"/><use href="#p5" x="394" y="65"/><use href="#p0" x="400" y="65"/><use href="#p2" x="406" y="65"/><use href="#p2" x="434" y="65"/><use href="#pcm" x="440" y="65"/><use href="#p3" x="444" y="65"/><use href="#p4" x="450" y="65"/><use href="#p1" x="456" y="65"/><use href="#p2" x="484" y="65"/><use href="#pcm" x="490" y="65"/><use href="#p6" x="494" y="65"/><use href="#p1" x="500" y="65"/><use href="#p1" x="506" y="65"/><use href="#p2" x="534" y="65"/><use href="#pcm" x="540" y="65"/><use href="#p5" x="544" y="65"/><use href="#p0" x="550" y="65"/><use href="#p1" x="556" y="65"/><use href="#p2" x="584" y="65"/><use href="#pcm" x="590" y="65"/><use href="#p4" x="594" y="65"/><use href="#p1" x="600" y="65"/><use href="#p2" x="606" y="65"/><use href="#p2" x="634" y="65"/><use href="#pcm" x="640" y="65"/><use href="#p3" x="644" y="65"/><use href="#p7" x="650" y="65"/><use href="#p4" x="656" y="65"/><use href="#p2" x="684" y="65"/><use href="#pcm" x="690" y="65"/><use href="#p6" x="694" y="65"/><use href="#p5" x="700" y="65"/><use href="#p7" x="706" y="65"/><use href="#p2" x="734" y="65"/><use href="#pcm" x="740" y="65"/><use href="#p5" x="744" y="65"/><use href="#p6" x="750" y="65"/><use href="#p8" x="756" y="65"/><use href="#p2" x="784" y="65"/><use href="#pcm" x="790" y="65"/><use href="#p9" x="794" y="65"/><use href="#p3" x="800" y="65"/><use href="#p0" x="806" y="65"/><use href="#p8" x="839" y="65"/><use href="#pcm" x="845" y="65"/><use href="#p6" x="849" y="65"/><use href="#p8" x="855" y="65"/><use href="#p5" x="861" y="65"/><use href="#p2" x="889" y="65"/><use href="#pcm" x="895" y="65"/><use href="#p7" x="899" y="65"/><use href="#p3" x="905" y="65"/><use href="#p0" x="911" y="65"/><use href="#p2" x="939" y="65"/><use href="#pcm" x="945" y="65"/><use href="#p9" x="949" y="65"/><use href="#p1" x="955" y="65"/><use href="#p0" x="961" y="65"/><use href="#p2" x="10" y="84"/><use href="#p5" x="16" y="84"/><use href="#psl" x="22" y="84"/><use href="#p0" x="28" y="84"/><use href="#p4" x="34" y="84"/><use href="#psl" x="40" y="84"/><use href="#p2" x="46" y="84"/><use href="#p3" x="52" y="84"/><use href="#p2" x="84" y="84"/><use href="#pcm" x="90" y="84"/><use href="#p4" x="94" y="84"/><use href="#p1" x="100" y="84"/><use href="#p2" x="106" y="84"/><use href="#p2" x="134" y="84"/><use href="#pcm" x="140" y="84"/><use href="#p3" x="144" y="84"/><use href="#p8" x="150" y="84"/><use href="#p3" x="156" y="84"/><use href="#p2" x="184" y="84"/><use href="#pcm" x="190" y="84"/><use href="#p3" x="194" y="84"/><use href="#p3" x="200" y="84"/><use href="#p7" x="206" y="84"/><use href="#p2" x="234" y="84"/><use href="#pcm" x="240" y="84"/><use href="#p4" x="244" y="84"/><use href="#p3" x="250" y="84"/><use href="#p7" x="256" y="84"/><use href="#p2" x="284" y="84"/><use href="#pcm" x="290" y="84"/><use href="#p5" x="294" y="84"/><use href="#p9" x="300" y="84"/><use href="#p8" x="306" y="84"/><use href="#p2" x="334" y="84"/><use href="#pcm" x="340" y="84"/><use href="#p5" x="344" y="84"/><use href="#p6" x="350" y="84"/><use href="#p9" x="356" y="84"/><use href="#p2" x="384" y="84"/><use href="#pcm" x="390" y="84"/><use href="#p4" x="394" y="84"/><use href="#p8" x="400" y="84"/><use href="#p3" x="406" y="84"/><use href="#p2" x="434" y="84"/><use href="#pcm" x="440" y="84"/><use href="#p3" x="444" y="84"/><use href="#p2" x="450" y="84"/><use href="#p8" x="456" y="84"/><use href="#p2" x="484" y="84"/><use href="#pcm" x="490" y="84"/><use href="#p5" x="494" y="84"/><use href="#p9" x="500" y="84"/><use href="#p7" x="506" y="84"/><use href="#p2" x="534" y="84"/><use href="#pcm" x="540" y="84"/><use href="#p5" x="544" y="84"/><use href="#p0" x="550" y="84"/><use href="#p1" x="556" y="84"/><use href="#p2" x="584" y="84"/><use href="#pcm" x="590" y="84"/><use href="#p4" x="594" y="84"/><use href="#p1" x="600" y="84"/><use href="#p3" x="606" y="84"/><use href="#p2" x="634" y="84"/><use href="#pcm" x="640" y="84"/><use href="#p3" x="644" y="84"/><use href="#p7" x="650" y="84"/><use href="#p1" x="656" y="84"/><use href="#p2" x="684" y="84"/><use href="#pcm" x="690" y="84"/><use href="#p6" x="694" y="84"/><use href="#p5" x="700" y="84"/><use href="#p3" x="706" y="84"/><use href="#p2" x="734" y="84"/><use href="#pcm" x="740" y="84"/><use href="#p5" x="744" y="84"/><use href="#p6" x="750" y="84"/><use href="#p8" x="756" y="84"/><use href="#p2" x="784" y="84"/><use href="#pcm" x="790" y="84"/><use href="#p9" x="794" y="84"/><use href="#p2" x="800" y="84"/><use href="#p7" x="806" y="84"/><use href="#p8" x="839" y="84"/><use href="#pcm" x="845" y="84"/><use href="#p6" x="849" y="84"/><use href="#p8" x="855" y="84"/><use href="#p0" x="861" y="84"/><use href="#p2" x="889" y="84"/><use href="#pcm" x="895" y="84"/><use href="#p7" x="899" y="84"/><use href="#p4" x="905" y="84"/><use href="#p0" x="911" y="84"/><use href="#p2" x="939" y="84"/><use href="#pcm" x="945" y="84"/><use href="#p9" x="949" y="84"/><use href="#p1" x="955" y="84"/><use href="#p0" x="961" y="84"/><use href="#p2" x="10" y="103"/><use href="#p5" x="16" y="103"/><use href="#psl" x="22" y="103"/><use href="#p0" x="28" y="103"/><use href="#p4" x="34" y="103"/><use href="#psl" x="40" y="103"/><use href="#p2" x="46" y="103"/><use href="#p2" x="52" y="103"/><use href="#p2" x="84" y="103"/><use href="#pcm" x="90" y="103"/><use href="#p4" x="94" y="103"/><use href="#p1" x="100" y="103"/><use href="#p5" x="106" y="103"/><use href="#p2" x="134" y="103"/><use href="#pcm" x="140" y="103"/><use href="#p3" x="144" y="103"/><use href="#p8" x="150" y="103"/><use href="#p0" x="156" y="103"/><use href="#p2" x="184" y="103"/><use href="#pcm" x="190" y="103"/><use href="#p3" x="194" y="103"/><use href="#p3" x="200" y="103"/><use href="#p0" x="206" y="103"/><use href="#p2" x="234" y="103"/><use href="#pcm" x="240" y="103"/><use href="#p4" x="244" y="103"/><use href="#p4" x="250" y="103"/><use href="#p1" x="256" y="103"/><use href="#p2" x="284" y="103"/><use href="#pcm" x="290" y="103"/><use href="#p6" x="294" y="103"/><use href="#p2" x="300" y="103"/><use href="#p1" x="306" y="103"/><use href="#p2" x="334" y="103"/><use href="#pcm" x="340" y="103"/><use href="#p5" x="344" y="103"/><use href="#p7" x="350" y="103"/><use href="#p8" x="356" y="103"/><use href="#p2" x="384" y="103"/><use href="#pcm" x="390" y="103"/><use href="#p4" x="394" y="103"/><use href="#p9" x="400" y="103"/><use href="#p0" x="406" y="103"/><use href="#p2" x="434" y="103"/><use href="#pcm" x="440" y="103"/><use href="#p3" x="444" y="103"/><use href="#p3" x="450" y="103"/><use href="#p6" x="456" y="103"/><use href="#p2" x="484" y="103"/><use href="#pcm" x="490" y="103"/><use href="#p6" x="494" y="103"/><use href="#p0" x="500" y="103"/><use href="#p0" x="506" y="103"/><use href="#p2" x="534" y="103"/><use href="#pcm" x="540" y="103"/><use href="#p5" x="544" y="103"/><use href="#p0" x="550" y="103"/><use href="#p0" x="556" y="103"/><use href="#p2" x="584" y="103"/><use href="#pcm" x="590" y="103"/><use href="#p4" x="594" y="103"/><use href="#p1" x="600" y="103"/><use href="#p4" x="606" y="103"/><use href="#p2" x="634" y="103"/><use href="#pcm" x="640" y="103"/><use href="#p3" x="644" y="103"/><use href="#p6" x="650" y="103"/><use href="#p3" x="656" y="103"/><use href="#p2" x="684" y="103"/><use href="#pcm" x="690" y="103"/><use href="#p6" x="694" y="103"/><use href="#p4" x="700" y="103"/><use href="#p8" x="706" y="103"/><use href="#p2" x="734" y="103"/><use href="#pcm" x="740" y="103"/><use href="#p5" x="744" y="103"/><use href="#p6" x="750" y="103"/><use href="#p7" x="756" y="103"/><use href="#p2" x="784" y="103"/><use href="#pcm" x="790" y="103"/><use href="#p9" x="794" y="103"/><use href="#p2" x="800" y="103"/><use href="#p3" x="806" y="103"/><use href="#p8" x="839" y="103"/><use href="#pcm" x="845" y="103"/><use href="#p6" x="849" y="103"/><use href="#p7" x="855" y="103"/><use href="#p6" x="861" y="103"/><use href="#p2" x="889" y="103"/><use href="#pcm" x="895" y="103"/><use href="#p7" x="899" y="103"/><use href="#p1" x="905" y="103"/><use href="#p0" x="911" y="103"/><use href="#p2" x="939" y="103"/><use href="#pcm" x="945" y="103"/><use href="#p9" x="949" y="103"/><use href="#p1" x="955" y="103"/><use href="#p0" x="961" y="103"/><use href="#p2" x="10" y="122"/><use href="#p5" x="16" y="122"/><use href="#psl" x="22" y="122"/><use href="#p0" x="28" y="122"/><use href="#p4" x="34" y="122"/><use href="#psl" x="40" y="122"/><use href="#p2" x="46" y="122"/><use href="#p1" x="52" y="122"/><use href="#p2" x="84" y="122"/><use href="#pcm" x="90" y="122"/><use href="#p4" x="94" y="122"/><use href="#p1" x="100" y="122"/><use href="#p6" x="106" y="122"/><use href="#p2" x="134" y="122"/><use href="#pcm" x="140" y="122"/><use href="#p3" x="144" y="122"/><use href="#p7" x="150" y="122"/><use href="#p9" x="156" y="122"/><use href="#p2" x="184" y="122"/><use href="#pcm" x="190" y="122"/><use href="#p3" x="194" y="122"/><use href="#p3" x="200" y="122"/><use href="#p1" x="206" y="122"/><use href="#p2" x="234" y="122"/><use href="#pcm" x="240" y="122"/><use href="#p4" x="244" y="122"/><use href="#p4" x="250" y="122"/><use href="#p1" x="256" y="122"/><use href="#p2" x="284" y="122"/><use href="#pcm" x="290" y="122"/><use href="#p6" x="294" y="122"/><use href="#p0" x="300" y="122"/><use href="#p2" x="306" y="122"/><use href="#p2" x="334" y="122"/><use href="#pcm" x="340" y="122"/><use href="#p5" x="344" y="122"/><use href="#p5" x="350" y="122"/><use href="#p1" x="356" y="122"/><use href="#p2" x="384" y="122"/><use href="#pcm" x="390" y="122"/><use href="#p4" x="394" y="122"/><use href="#p5" x="400" y="122"/><use href="#p4" x="406" y="122"/><use href="#p2" x="434" y="122"/><use href="#pcm" x="440" y="122"/><use href="#p2" x="444" y="122"/><use href="#p9" x="450" y="122"/><use href="#p9" x="456" y="122"/><use href="#p2" x="484" y="122"/><use href="#pcm" x="490" y="122"/><use href="#p5" x="494" y="122"/><use href="#p9" x="500" y="122"/><use href="#p0" x="506" y="122"/><use href="#p2" x="534" y="122"/><use href="#pcm" x="540" y="122"/><use href="#p4" x="544" y="122"/><use href="#p9" x="550" y="122"/><use href="#p8" x="556" y="122"/><use href="#p2" x="584" y="122"/><use href="#pcm" x="590" y="122"/><use href="#p4" x="594" y="122"/><use href="#p1" x="600" y="122"/><use href="#p3" x="606" y="122"/><use href="#p2" x="634" y="122"/><use href="#pcm" x="640" y="122"/><use href="#p3" x="644" y="122"/><use href="#p5" x="650" y="122"/><use href="#p6" x="656" y="122"/><use href="#p2" x="684" y="122"/><use href="#pcm" x="690" y="122"/><use href="#p6" x="694" y="122"/><use href="#p4" x="700" y="122"/><use href="#p2" x="706" y="122"/><use href="#p2" x="734" y="122"/><use href="#pcm" x="740" y="122"/><use href="#p5" x="744" y="122"/><use href="#p6" x="750" y="122"/><use href="#p6" x="756" y="122"/><use href="#p2" x="784" y="122"/><use href="#pcm" x="790" y="122"/><use href="#p9" x="794" y="122"/><use href="#p1" x="800" y="122"/><use href="#p8" x="806" y="122"/><use href="#p8" x="839" y="122"/><use href="#pcm" x="845" y="122"/><use href="#p6" x="849" y="122"/><use href="#p7" x="855" y="122"/><use href="#p1" x="861" y="122"/><use href="#p2" x="889" y="122"/><use href="#pcm" x="895" y="122"/><use href="#p7" x="899" y="122"/><use href="#p1" x="905" y="122"/><use href="#p0" x="911" y="122"/><use href="#p2" x="939" y="122"/><use href="#pcm" x="945" y="122"/><use href="#p9" x="949" y="122"/><use href="#p1" x="955" y="122"/><use href="#p0" x="961" y="122"/><use href="#p2" x="10" y="141"/><use href="#p5" x="16" y="141"/><use href="#psl" x="22" y="141"/><use href="#p0" x="28" y="141"/><use href="#p4" x="34" y="141"/><use href="#psl" x="40" y="141"/><use href="#p1" x="46" y="141"/><use href="#p8" x="52" y="141"/><use href="#p2" x="84" y="141"/><use href="#pcm" x="90" y="141"/><use href="#p4" x="94" y="141"/><use href="#p2" x="100" y="141"/><use href="#p4" x="106" y="141"/><use href="#p2" x="134" y="141"/><use href="#pcm" x="140" y="141"/><use href="#p4" x="144" y="141"/><use href="#p0" x="150" y="141"/><use href="#p3" x="156" y="141"/><use href="#p2" x="184" y="141"/><use href="#pcm" x="190" y="141"/><use href="#p3" x="194" y="141"/><use href="#p6" x="200" y="141"/><use href="#p2" x="206" y="141"/><use href="#p2" x="234" y="141"/><use href="#pcm" x="240" y="141"/><use href="#p4" x="244" y="141"/><use href="#p6" x="250" y="141"/><use href="#p4" x="256" y="141"/><use href="#p2" x="284" y="141"/><use href="#pcm" x="290" y="141"/><use href="#p6" x="294" y="141"/><use href="#p2" x="300" y="141"/><use href="#p0" x="306" y="141"/><use href="#p2" x="334" y="141"/><use href="#pcm" x="340" y="141"/><use href="#p5" x="344" y="141"/><use href="#p6" x="350" y="141"/><use href="#p1" x="356" y="141"/><use href="#p2" x="384" y="141"/><use href="#pcm" x="390" y="141"/><use href="#p4" x="394" y="141"/><use href="#p6" x="400" y="141"/><use href="#p4" x="406" y="141"/><use href="#p2" x="434" y="141"/><use href="#pcm" x="440" y="141"/><use href="#p3" x="444" y="141"/><use href="#p0" x="450" y="141"/><use href="#p9" x="456" y="141"/><use href="#p2" x="484" y="141"/><use href="#pcm" x="490" y="141"/><use href="#p6" x="494" y="141"/><use href="#p2" x="500" y="141"/><use href="#p4" x="506" y="141"/><use href="#p2" x="534" y="141"/><use href="#pcm" x="540" y="141"/><use href="#p5" x="544" y="141"/><use href="#p0" x="550" y="141"/><use href="#p2" x="556" y="141"/><use href="#p2" x="584" y="141"/><use href="#pcm" x="590" y="141"/><use href="#p4" x="594" y="141"/><use href="#p2" x="600" y="141"/><use href="#p2" x="606" y="141"/><use href="#p2" x="634" y="141"/><use href="#pcm" x="640" y="141"/><use href="#p3" x="644" y="141"/><use href="#p7" x="650" y="141"/><use href="#p5" x="656" y="141"/><use href="#p2" x="684" y="141"/><use href="#pcm" x="690" y="141"/><use href="#p6" x="694" y="141"/><use href="#p6" x="700" y="141"/><use href="#p5" x="706" y="141"/><use href="#p2" x="734" y="141"/><use href="#pcm" x="740" y="141"/><use href="#p5" x="744" y="141"/><use href="#p9" x="750" y="141"/><use href="#p0" x="756" y="141"/><use href="#p2" x="784" y="141"/><use href="#pcm" x="790" y="141"/><use href="#p9" x="794" y="141"/><use href="#p4" x="800" y="141"/><use href="#p2" x="806" y="141"/><use href="#p8" x="839" y="141"/><use href="#pcm" x="845" y="141"/><use href="#p6" x="849" y="141"/><use href="#p9" x="855" y="141"/><use href="#p5" x="861" y="141"/><use href="#p2" x="889" y="141"/><use href="#pcm" x="895" y="141"/><use href="#p7" x="899" y="141"/><use href="#p1" x="905" y="141"/><use href="#p0" x="911" y="141"/><use href="#p2" x="939" y="141"/><use href="#pcm" x="945" y="141"/><use href="#p9" x="949" y="141"/><use href="#p1" x="955" y="141"/><use href="#p0" x="961" y="141"/><use href="#p2" x="10" y="160"/><use href="#p5" x="16" y="160"/><use href="#psl" x="22" y="160"/><use href="#p0" x="28" y="160"/><use href="#p4" x="34" y="160"/><use href="#psl" x="40" y="160"/><use href="#p1" x="46" y="160"/><use href="#p7" x="52" y="160"/><use href="#p2" x="84" y="160"/><use href="#pcm" x="90" y="160"/><use href="#p4" x="94" y="160"/><use href="#p6" x="100" y="160"/><use href="#p7" x="106" y="160"/><use href="#p2" x="134" y="160"/><use href="#pcm" x="140" y="160"/><use href="#p4" x="144" y="160"/><use href="#p2" x="150" y="160"/><use href="#p8" x="156" y="160"/><use href="#p2" x="184" y="160"/><use href="#pcm" x="190" y="160"/><use href="#p3" x="194" y="160"/><use href="#p8" x="200" y="160"/><use href="#p5" x="206" y="160"/><use href="#p2" x="234" y="160"/><use href="#pcm" x="240" y="160"/><use href="#p4" x="244" y="160"/><use href="#p8" x="250" y="160"/><use href="#p3" x="256" y="160"/><use href="#p2" x="284" y="160"/><use href="#pcm" x="290" y="160"/><use href="#p6" x="294" y="160"/><use href="#p4" x="300" y="160"/><use href="#p5" x="306" y="160"/><use href="#p2" x="334" y="160"/><use href="#pcm" x="340" y="160"/><use href="#p5" x="344" y="160"/><use href="#p7" x="350" y="160"/><use href="#p9" x="356" y="160"/><use href="#p2" x="384" y="160"/><use href="#pcm" x="390" y="160"/><use href="#p4" x="394" y="160"/><use href="#p9" x="400" y="160"/><use href="#p0" x="406" y="160"/><use href="#p2" x="434" y="160"/><use href="#pcm" x="440" y="160"/><use href="#p3" x="444" y="160"/><use href="#p3" x="450" y="160"/><use href="#p5" x="456" y="160"/><use href="#p2" x="484" y="160"/><use href="#pcm" x="490" y="160"/><use href="#p6" x="494" y="160"/><use href="#p5" x="500" y="160"/><use href="#p0" x="506" y="160"/><use href="#p2" x="534" y="160"/><use href="#pcm" x="540" y="160"/><use href="#p5" x="544" y="160"/><use href="#p0" x="550" y="160"/><use href="#p3" x="556" y="160"/><use href="#p2" x="584" y="160"/><use href="#pcm" x="590" y="160"/><use href="#p4" x="594" y="160"/><use href="#p3" x="600" y="160"/><use href="#p2" x="606" y="160"/><use href="#p2" x="634" y="160"/><use href="#pcm" x="640" y="160"/><use href="#p3" x="644" y="160"/><use href="#p9" x="650" y="160"/><use href="#p9" x="656" y="160"/><use href="#p2" x="684" y="160"/><use href="#pcm" x="690" y="160"/><use href="#p6" x="694" y="160"/><use href="#p9" x="700" y="160"/><use href="#p4" x="706" y="160"/><use href="#p2" x="734" y="160"/><use href="#pcm" x="740" y="160"/><use href="#p6" x="744" y="160"/><use href="#p0" x="750" y="160"/><use href="#p2" x="756" y="160"/><use href="#p2" x="784" y="160"/><use href="#pcm" x="790" y="160"/><use href="#p9" x="794" y="160"/><use href="#p6" x="800" y="160"/><use href="#p8" x="806" y="160"/><use href="#p8" x="839" y="160"/><use href="#pcm" x="845" y="160"/><use href="#p7" x="849" y="160"/><use href="#p2" x="855" y="160"/><use href="#p2" x="861" y="160"/><use href="#p2" x="889" y="160"/><use href="#pcm" x="895" y="160"/><use href="#p7" x="899" y="160"/><use href="#p1" x="905" y="160"/><use href="#p0" x="911" y="160"/><use href="#p2" x="939" y="160"/><use href="#pcm" x="945" y="160"/><use href="#p9" x="949" y="160"/><use href="#p1" x="955" y="160"/><use href="#p0" x="961" y="160"/><use href="#p2" x="10" y="179"/><use href="#p5" x="16" y="179"/><use href="#psl" x="22" y="179"/><use href="#p0" x="28" y="179"/><use href="#p4" x="34" y="179"/><use href="#psl" x="40" y="179"/><use href="#p1" x="46" y="179"/><use href="#p6" x="52" y="179"/><use href="#p2" x="84" y="179"/><use href="#pcm" x="90" y="179"/><use href="#p4" x="94" y="179"/><use href="#p6" x="100" y="179"/><use href="#p7" x="106" y="179"/><use href="#p2" x="134" y="179"/><use href="#pcm" x="140" y="179"/><use href="#p4" x="144" y="179"/><use href="#p0" x="150" y="179"/><use href="#p4" x="156" y="179"/><use href="#p2" x="184" y="179"/><use href="#pcm" x="190" y="179"/><use href="#p3" x="194" y="179"/><use href="#p5" x="200" y="179"/><use href="#p1" x="206" y="179"/><use href="#p2" x="234" y="179"/><use href="#pcm" x="240" y="179"/><use href="#p4" x="244" y="179"/><use href="#p6" x="250" y="179"/><use href="#p3" x="256" y="179"/><use href="#p2" x="284" y="179"/><use href="#pcm" x="290" y="179"/><use href="#p6" x="294" y="179"/><use href="#p2" x="300" y="179"/><use href="#p9" x="306" y="179"/><use href="#p2" x="334" y="179"/><use href="#pcm" x="340" y="179"/><use href="#p5" x="344" y="179"/><use href="#p6" x="350" y="179"/><use href="#p6" x="356" y="179"/><use href="#p2" x="384" y="179"/><use href="#pcm" x="390" y="179"/><use href="#p4" x="394" y="179"/><use href="#p6" x="400" y="179"/><use href="#p4" x="406" y="179"/><use href="#p2" x="434" y="179"/><use href="#pcm" x="440" y="179"/><use href="#p3" x="444" y="179"/><use href="#p1" x="450" y="179"/><use href="#p0" x="456" y="179"/><use href="#p2" x="484" y="179"/><use href="#pcm" x="490" y="179"/><use href="#p6" x="494" y="179"/><use href="#p3" x="500" y="179"/><use href="#p6" x="506" y="179"/><use href="#p2" x="534" y="179"/><use href="#pcm" x="540" y="179"/><use href="#p5" x="544" y="179"/><use href="#p0" x="550" y="179"/><use href="#p0" x="556" y="179"/><use href="#p2" x="584" y="179"/><use href="#pcm" x="590" y="179"/><use href="#p4" x="594" y="179"/><use href="#p2" x="600" y="179"/><use href="#p4" x="606" y="179"/><use href="#p2" x="634" y="179"/><use href="#pcm" x="640" y="179"/><use href="#p3" x="644" y="179"/><use href="#p6" x="650" y="179"/><use href="#p1" x="656" y="179"/><use href="#p2" x="684" y="179"/><use href="#pcm" x="690" y="179"/><use href="#p6" x="694" y="179"/><use href="#p6" x="700" y="179"/><use href="#p4" x="706" y="179"/><use href="#p2" x="734" y="179"/><use href="#pcm" x="740" y="179"/><use href="#p5" x="744" y="179"/><use href="#p9" x="750" y="179"/><use href="#p1" x="756" y="179"/><use href="#p2" x="784" y="179"/><use href="#pcm" x="790" y="179"/><use href="#p9" x="794" y="179"/><use href="#p4" x="800" y="179"/><use href="#p1" x="806" y="179"/><use href="#p8" x="839" y="179"/><use href="#pcm" x="845" y="179"/><use href="#p6" x="849" y="179"/><use href="#p9" x="855" y="179"/><use href="#p6" x="861" y="179"/><use href="#p2" x="889" y="179"/><use href="#pcm" x="895" y="179"/><use href="#p7" x="899" y="179"/><use href="#p2" x="905" y="179"/><use href="#p0" x="911" y="179"/><use href="#p2" x="939" y="179"/><use href="#pcm" x="945" y="179"/><use href="#p9" x="949" y="179"/><use href="#p1" x="955" y="179"/><use href="#p0" x="961" y="179"/><use href="#p2" x="10" y="198"/><use href="#p5" x="16" y="198"/><use href="#psl" x="22" y="198"/><use href="#p0" x="28" y="198"/><use href="#p4" x="34" y="198"/><use href="#psl" x="40" y="198"/><use href="#p1" x="46" y="198"/><use href="#p5" x="52" y="198"/><use href="#p2" x="84" y="198"/><use href="#pcm" x="90" y="198"/><use href="#p4" x="94" y="198"/><use href="#p9" x="100" y="198"/><use href="#p2" x="106" y="198"/><use href="#p2" x="134" y="198"/><use href="#pcm" x="140" y="198"/><use href="#p4" x="144" y="198"/><use href="#p4" x="150" y="198"/><use href="#p4" x="156" y="198"/><use href="#p2" x="184" y="198"/><use href="#pcm" x="190" y="198"/><use href="#p3" x="194" y="198"/><use href="#p9" x="200" y="198"/><use href="#p9" x="206" y="198"/><use href="#p2" x="234" y="198"/><use href="#pcm" x="240" y="198"/><use href="#p4" x="244" y="198"/><use href="#p9" x="250" y="198"/><use href="#p9" x="256" y="198"/><use href="#p2" x="284" y="198"/><use href="#pcm" x="290" y="198"/><use href="#p6" x="294" y="198"/><use href="#p6" x="300" y="198"/><use href="#p4" x="306" y="198"/><use href="#p2" x="334" y="198"/><use href="#pcm" x="340" y="198"/><use href="#p5" x="344" y="198"/><use href="#p9" x="350" y="198"/><use href="#p7" x="356" y="198"/><use href="#p2" x="384" y="198"/><use href="#pcm" x="390" y="198"/><use href="#p5" x="394" y="198"/><use href="#p0" x="400" y="198"/><use href="#p1" x="406" y="198"/><use href="#p2" x="434" y="198"/><use href="#pcm" x="440" y="198"/><use href="#p3" x="444" y="198"/><use href="#p4" x="450" y="198"/><use href="#p9" x="456" y="198"/><use href="#p2" x="484" y="198"/><use href="#pcm" x="490" y="198"/><use href="#p6" x="494" y="198"/><use href="#p7" x="500" y="198"/><use href="#p2" x="506" y="198"/><use href="#p2" x="534" y="198"/><use href="#pcm" x="540" y="198"/><use href="#p5" x="544" y="198"/><use href="#p0" x="550" y="198"/><use href="#p5" x="556" y="198"/><use href="#p2" x="584" y="198"/><use href="#pcm" x="590" y="198"/><use href="#p4" x="594" y="198"/><use href="#p4" x="600" y="198"/><use href="#p2" x="606" y="198"/><use href="#p2" x="634" y="198"/><use href="#pcm" x="640" y="198"/><use href="#p4" x="644" y="198"/><use href="#p0" x="650" y="198"/><use href="#p2" x="656" y="198"/><use href="#p2" x="684" y="198"/><use href="#pcm" x="690" y="198"/><use href="#p7" x="694" y="198"/><use href="#p0" x="700" y="198"/><use href="#p9" x="706" y="198"/><use href="#p2" x="734" y="198"/><use href="#pcm" x="740" y="198"/><use href="#p6" x="744" y="198"/><use href="#p1" x="750" y="198"/><use href="#p4" x="756" y="198"/><use href="#p2" x="784" y="198"/><use href="#pcm" x="790" y="198"/><use href="#p9" x="794" y="198"/><use href="#p8" x="800" y="198"/><use href="#p4" x="806" y="198"/><use href="#p8" x="839" y="198"/><use href="#pcm" x="845" y="198"/><use href="#p7" x="849" y="198"/><use href="#p3" x="855" y="198"/><use href="#p9" x="861" y="198"/><use href="#p2" x="889" y="198"/><use href="#pcm" x="895" y="198"/><use href="#p7" x="899" y="198"/><use href="#p2" x="905" y="198"/><use href="#p0" x="911" y="198"/><use href="#p2" x="939" y="198"/><use href="#pcm" x="945" y="198"/><use href="#p9" x="949" y="198"/><use href="#p2" x="955" y="198"/><use href="#p0" x="961" y="198"/><use href="#pC" x="888" y="9"/><use href="#pD" x="897" y="9"/><use href="#p3" x="503" y="254"/><use href="#pcm" x="509" y="254"/><use href="#p2" x="513" y="254"/><use href="#p0" x="519" y="254"/><use href="#p0" x="525" y="254"/><use href="#p3" x="503" y="290"/><use href="#pcm" x="509" y="290"/><use href="#p0" x="513" y="290"/><use href="#p0" x="519" y="290"/><use href="#p0" x="525" y="290"/><use href="#p2" x="503" y="325"/><use href="#pcm" x="509" y="325"/><use href="#p8" x="513" y="325"/><use href="#p0" x="519" y="325"/><use href="#p0" x="525" y="325"/><use href="#p2" x="503" y="360"/><use href="#pcm" x="509" y="360"/><use href="#p6" x="513" y="360"/><use href="#p0" x="519" y="360"/><use href="#p0" x="525" y="360"/><use href="#p2" x="503" y="396"/><use href="#pcm" x="509" y="396"/><use href="#p4" x="513" y="396"/><use href="#p0" x="519" y="396"/><use href="#p0" x="525" y="396"/><use href="#p0" x="13" y="435"/><use href="#p2" x="19" y="435"/><use href="#p0" x="45" y="435"/><use href="#p2" x="51" y="435"/><use href="#psl" x="57" y="435"/><use href="#p0" x="63" y="435"/><use href="#p7" x="69" y="435"/><use href="#p0" x="94" y="435"/><use href="#p2" x="100" y="435"/><use href="#psl" x="106" y="435"/><use href="#p1" x="112" y="435"/><use href="#p7" x="118" y="435"/><use href="#p0" x="175" y="435"/><use href="#p3" x="181" y="435"/><use href="#p0" x="200" y="435"/><use href="#p3" x="206" y="435"/><use href="#psl" x="212" y="435"/><use href="#p0" x="218" y="435"/><use href="#p7" x="224" y="435"/><use href="#p0" x="248" y="435"/><use href="#p3" x="254" y="435"/><use href="#psl" x="260" y="435"/><use href="#p1" x="266" y="435"/><use href="#p7" x="272" y="435"/><use href="#p0" x="338" y="435"/><use href="#p4" x="344" y="435"/><use href="#p0" x="370" y="435"/><use href="#p4" x="376" y="435"/><use href="#psl" x="382" y="435"/><use href="#p0" x="388" y="435"/><use href="#p7" x="394" y="435"/><use href="#p0" x="419" y="435"/><use href="#p4" x="425" y="435"/><use href="#psl" x="431" y="435"/><use href="#p1" x="437" y="435"/><use href="#p5" x="443" y="435"/><use href="#p0" x="489" y="435"/><use href="#p4" x="495" y="435"/><use href="#psl" x="501" y="435"/><use href="#p2" x="507" y="435"/><use href="#p5" x="513" y="435"/><use href="#p2" x="566" y="243"/><use href="#p5" x="572" y="243"/><use href="#psl" x="578" y="243"/><use href="#p0" x="584" y="243"/><use href="#p4" x="590" y="243"/><use href="#psl" x="596" y="243"/><use href="#p2" x="602" y="243"/><use href="#p4" x="608" y="243"/><use href="#p2" x="682" y="243"/><use href="#pcm" x="688" y="243"/><use href="#p4" x="692" y="243"/><use href="#p3" x="698" y="243"/><use href="#p3" x="704" y="243"/><use href="#p2" x="767" y="243"/><use href="#pcm" x="773" y="243"/><use href="#p4" x="777" y="243"/><use href="#p4" x="783" y="243"/><use href="#p4" x="789" y="243"/><use href="#p2" x="851" y="243"/><use href="#pcm" x="857" y="243"/><use href="#p4" x="861" y="243"/><use href="#p3" x="867" y="243"/><use href="#p7" x="873" y="243"/><use href="#p2" x="566" y="262"/><use href="#p5" x="572" y="262"/><use href="#psl" x="578" y="262"/><use href="#p0" x="584" y="262"/><use href="#p4" x="590" y="262"/><use href="#psl" x="596" y="262"/><use href="#p2" x="602" y="262"/><use href="#p3" x="608" y="262"/><use href="#p2" x="682" y="262"/><use href="#pcm" x="688" y="262"/><use href="#p4" x="692" y="262"/><use href="#p3" x="698" y="262"/><use href="#p7" x="704" y="262"/><use href="#p2" x="767" y="262"/><use href="#pcm" x="773" y="262"/><use href="#p4" x="777" y="262"/><use href="#p3" x="783" y="262"/><use href="#p7" x="789" y="262"/><use href="#p2" x="851" y="262"/><use href="#pcm" x="857" y="262"/><use href="#p4" x="861" y="262"/><use href="#p4" x="867" y="262"/><use href="#p1" x="873" y="262"/><use href="#p2" x="566" y="281"/><use href="#p5" x="572" y="281"/><use href="#psl" x="578" y="281"/><use href="#p0" x="584" y="281"/><use href="#p4" x="590" y="281"/><use href="#psl" x="596" y="281"/><use href="#p2" x="602" y="281"/><use href="#p2" x="608" y="281"/><use href="#p2" x="682" y="281"/><use href="#pcm" x="688" y="281"/><use href="#p4" x="692" y="281"/><use href="#p4" x="698" y="281"/><use href="#p0" x="704" y="281"/><use href="#p2" x="767" y="281"/><use href="#pcm" x="773" y="281"/><use href="#p4" x="777" y="281"/><use href="#p4" x="783" y="281"/><use href="#p1" x="789" y="281"/><use href="#p2" x="851" y="281"/><use href="#pcm" x="857" y="281"/><use href="#p4" x="861" y="281"/><use href="#p4" x="867" y="281"/><use href="#p1" x="873" y="281"/><use href="#pda" x="961" y="281"/><use href="#p2" x="566" y="300"/><use href="#p5" x="572" y="300"/><use href="#psl" x="578" y="300"/><use href="#p0" x="584" y="300"/><use href="#p4" x="590" y="300"/><use href="#psl" x="596" y="300"/><use href="#p2" x="602" y="300"/><use href="#p1" x="608" y="300"/><use href="#p2" x="682" y="300"/><use href="#pcm" x="688" y="300"/><use href="#p4" x="692" y="300"/><use href="#p4" x="698" y="300"/><use href="#p8" x="704" y="300"/><use href="#p2" x="767" y="300"/><use href="#pcm" x="773" y="300"/><use href="#p4" x="777" y="300"/><use href="#p4" x="783" y="300"/><use href="#p1" x="789" y="300"/><use href="#p2" x="851" y="300"/><use href="#pcm" x="857" y="300"/><use href="#p4" x="861" y="300"/><use href="#p6" x="867" y="300"/><use href="#p4" x="873" y="300"/><use href="#p2" x="566" y="319"/><use href="#p5" x="572" y="319"/><use href="#psl" x="578" y="319"/><use href="#p0" x="584" y="319"/><use href="#p4" x="590" y="319"/><use href="#psl" x="596" y="319"/><use href="#p1" x="602" y="319"/><use href="#p8" x="608" y="319"/><use href="#p2" x="682" y="319"/><use href="#pcm" x="688" y="319"/><use href="#p4" x="692" y="319"/><use href="#p5" x="698" y="319"/><use href="#p8" x="704" y="319"/><use href="#p2" x="767" y="319"/><use href="#pcm" x="773" y="319"/><use href="#p4" x="777" y="319"/><use href="#p6" x="783" y="319"/><use href="#p4" x="789" y="319"/><use href="#p2" x="851" y="319"/><use href="#pcm" x="857" y="319"/><use href="#p4" x="861" y="319"/><use href="#p8" x="867" y="319"/><use href="#p3" x="873" y="319"/><use href="#p2" x="566" y="338"/><use href="#p5" x="572" y="338"/><use href="#psl" x="578" y="338"/><use href="#p0" x="584" y="338"/><use href="#p4" x="590" y="338"/><use href="#psl" x="596" y="338"/><use href="#p1" x="602" y="338"/><use href="#p7" x="608" y="338"/><use href="#p2" x="682" y="338"/><use href="#pcm" x="688" y="338"/><use href="#p4" x="692" y="338"/><use href="#p6" x="698" y="338"/><use href="#p2" x="704" y="338"/><use href="#p2" x="767" y="338"/><use href="#pcm" x="773" y="338"/><use href="#p4" x="777" y="338"/><use href="#p8" x="783" y="338"/><use href="#p3" x="789" y="338"/><use href="#p2" x="851" y="338"/><use href="#pcm" x="857" y="338"/><use href="#p4" x="861" y="338"/><use href="#p6" x="867" y="338"/><use href="#p3" x="873" y="338"/><use href="#p2" x="566" y="357"/><use href="#p5" x="572" y="357"/><use href="#psl" x="578" y="357"/><use href="#p0" x="584" y="357"/><use href="#p4" x="590" y="357"/><use href="#psl" x="596" y="357"/><use href="#p1" x="602" y="357"/><use href="#p6" x="608" y="357"/><use href="#p2" x="682" y="357"/><use href="#pcm" x="688" y="357"/><use href="#p4" x="692" y="357"/><use href="#p8" x="698" y="357"/><use href="#p1" x="704" y="357"/><use href="#p2" x="767" y="357"/><use href="#pcm" x="773" y="357"/><use href="#p4" x="777" y="357"/><use href="#p6" x="783" y="357"/><use href="#p3" x="789" y="357"/><use href="#p2" x="851" y="357"/><use href="#pcm" x="857" y="357"/><use href="#p4" x="861" y="357"/><use href="#p9" x="867" y="357"/><use href="#p9" x="873" y="357"/><use href="#p2" x="566" y="376"/><use href="#p5" x="572" y="376"/><use href="#psl" x="578" y="376"/><use href="#p0" x="584" y="376"/><use href="#p4" x="590" y="376"/><use href="#psl" x="596" y="376"/><use href="#p1" x="602" y="376"/><use href="#p5" x="608" y="376"/><use href="#p2" x="682" y="376"/><use href="#pcm" x="688" y="376"/><use href="#p5" x="692" y="376"/><use href="#p0" x="698" y="376"/><use href="#p0" x="704" y="376"/><use href="#p2" x="767" y="376"/><use href="#pcm" x="773" y="376"/><use href="#p4" x="777" y="376"/><use href="#p9" x="783" y="376"/><use href="#p9" x="789" y="376"/><use href="#p2" x="851" y="376"/><use href="#pcm" x="857" y="376"/><use href="#p5" x="861" y="376"/><use href="#p0" x="867" y="376"/><use href="#p9" x="873" y="376"/><use href="#p2" x="566" y="395"/><use href="#p5" x="572" y="395"/><use href="#psl" x="578" y="395"/><use href="#p0" x="584" y="395"/><use href="#p4" x="590" y="395"/><use href="#psl" x="596" y="395"/><use href="#p1" x="602" y="395"/><use href="#p4" x="608" y="395"/><use href="#p2" x="682" y="395"/><use href="#pcm" x="688" y="395"/><use href="#p5" x="692" y="395"/><use href="#p2" x="698" y="395"/><use href="#p2" x="704" y="395"/><use href="#p2" x="767" y="395"/><use href="#pcm" x="773" y="395"/><use href="#p5" x="777" y="395"/><use href="#p0" x="783" y="395"/><use href="#p9" x="789" y="395"/><use href="#p2" x="851" y="395"/><use href="#pcm" x="857" y="395"/><use href="#p5" x="861" y="395"/><use href="#p1" x="867" y="395"/><use href="#p0" x="873" y="395"/><use href="#p2" x="566" y="414"/><use href="#p5" x="572" y="414"/><use href="#psl" x="578" y="414"/><use href="#p0" x="584" y="414"/><use href="#p4" x="590" y="414"/><use href="#psl" x="596" y="414"/><use href="#p1" x="602" y="414"/><use href="#p1" x="608" y="414"/><use href="#p2" x="682" y="414"/><use href="#pcm" x="688" y="414"/><use href="#p5" x="692" y="414"/><use href="#p1" x="698" y="414"/><use href="#p0" x="704" y="414"/><use href="#p2" x="767" y="414"/><use href="#pcm" x="773" y="414"/><use href="#p5" x="777" y="414"/><use href="#p1" x="783" y="414"/><use href="#p0" x="789" y="414"/><use href="#p2" x="851" y="414"/><use href="#pcm" x="857" y="414"/><use href="#p5" x="861" y="414"/><use href="#p1" x="867" y="414"/><use href="#p4" x="873" y="414"/><use href="#p2" x="566" y="433"/><use href="#p5" x="572" y="433"/><use href="#psl" x="578" y="433"/><use href="#p0" x="584" y="433"/><use href="#p4" x="590" y="433"/><use href="#psl" x="596" y="433"/><use href="#p1" x="602" y="433"/><use href="#p0" x="608" y="433"/><use href="#p2" x="682" y="433"/><use href="#pcm" x="688" y="433"/><use href="#p5" x="692" y="433"/><use href="#p2" x="698" y="433"/><use href="#p8" x="704" y="433"/><use href="#p2" x="767" y="433"/><use href="#pcm" x="773" y="433"/><use href="#p5" x="777" y="433"/><use href="#p1" x="783" y="433"/><use href="#p4" x="789" y="433"/><use href="#p2" x="851" y="433"/><use href="#pcm" x="857" y="433"/><use href="#p5" x="861" y="433"/><use href="#p4" x="867" y="433"/><use href="#p0" x="873" y="433"/></g><g fill="#fff"><use href="#p1" x="96" y="9"/><use href="#pY" x="102" y="9"/><use href="#p2" x="146" y="9"/><use href="#pY" x="152" y="9"/><use href="#p3" x="196" y="9"/><use href="#pY" x="202" y="9"/><use href="#p5" x="246" y="9"/><use href="#pY" x="252" y="9"/><use href="#p1" x="293" y="9"/><use href="#p0" x="299" y="9"/><use href="#pY" x="305" y="9"/><use href="#p2" x="343" y="9"/><use href="#p0" x="349" y="9"/><use href="#pY" x="355" y="9"/><use href="#p3" x="393" y="9"/><use href="#p0" x="399" y="9"/><use href="#pY" x="405" y="9"/><use href="#p5" x="443" y="9"/><use href="#p0" x="449" y="9"/><use href="#pY" x="455" y="9"/><use href="#p1" x="494" y="9"/><use href="#p9" x="547" y="9"/><use href="#p1" x="553" y="9"/><use href="#p1" x="596" y="9"/><use href="#pY" x="602" y="9"/><use href="#p2" x="646" y="9"/><use href="#pY" x="652" y="9"/><use href="#p3" x="696" y="9"/><use href="#pY" x="702" y="9"/><use href="#p1" x="746" y="9"/><use href="#pY" x="752" y="9"/><use href="#pA" x="792" y="9"/><use href="#pA" x="800" y="9"/><use href="#pda" x="808" y="9"/><use href="#pB" x="841" y="9"/><use href="#pB" x="849" y="9"/><use href="#pB" x="857" y="9"/><use href="#pda" x="865" y="9"/><use href="#pC" x="928" y="9"/><use href="#pP" x="937" y="9"/><use href="#p9" x="945" y="9"/><use href="#p1" x="951" y="9"/><use href="#pD" x="957" y="9"/><use href="#p5" x="588" y="225"/><use href="#pY" x="594" y="225"/><use href="#p1" x="652" y="225"/><use href="#p1" x="658" y="225"/><use href="#p3" x="676" y="225"/><use href="#p0" x="682" y="225"/><use href="#p1" x="737" y="225"/><use href="#p6" x="743" y="225"/><use href="#p0" x="761" y="225"/><use href="#p0" x="767" y="225"/></g><g fill="#0000f0"><use href="#p1" x="29" y="225"/><use href="#pY" x="35" y="225"/></g><g fill="#0000ff"><use href="#p2" x="71" y="225"/><use href="#pY" x="77" y="225"/></g><g fill="#e00000"><use href="#p3" x="113" y="225"/><use href="#pY" x="119" y="225"/></g><g fill="#8080ff"><use href="#p3" x="155" y="225"/><use href="#pY" x="161" y="225"/></g><g fill="#66cc00"><use href="#pA" x="197" y="225"/><use href="#pA" x="205" y="225"/><use href="#pda" x="213" y="225"/></g><g fill="#d80000"><use href="#p0" x="939" y="243"/><use href="#pcm" x="945" y="243"/><use href="#p0" x="949" y="243"/><use href="#p0" x="955" y="243"/><use href="#p7" x="961" y="243"/><use href="#p0" x="939" y="338"/><use href="#pcm" x="945" y="338"/><use href="#p0" x="949" y="338"/><use href="#p2" x="955" y="338"/><use href="#p0" x="961" y="338"/></g><g fill="#0000dc"><use href="#pda" x="933" y="262"/><use href="#p0" x="939" y="262"/><use href="#pcm" x="945" y="262"/><use href="#p0" x="949" y="262"/><use href="#p0" x="955" y="262"/><use href="#p4" x="961" y="262"/><use href="#pda" x="933" y="300"/><use href="#p0" x="939" y="300"/><use href="#pcm" x="945" y="300"/><use href="#p0" x="949" y="300"/><use href="#p2" x="955" y="300"/><use href="#p3" x="961" y="300"/><use href="#pda" x="933" y="319"/><use href="#p0" x="939" y="319"/><use href="#pcm" x="945" y="319"/><use href="#p0" x="949" y="319"/><use href="#p1" x="955" y="319"/><use href="#p9" x="961" y="319"/><use href="#pda" x="933" y="357"/><use href="#p0" x="939" y="357"/><use href="#pcm" x="945" y="357"/><use href="#p0" x="949" y="357"/><use href="#p3" x="955" y="357"/><use href="#p6" x="961" y="357"/><use href="#pda" x="933" y="376"/><use href="#p0" x="939" y="376"/><use href="#pcm" x="945" y="376"/><use href="#p0" x="949" y="376"/><use href="#p1" x="955" y="376"/><use href="#p0" x="961" y="376"/><use href="#pda" x="933" y="395"/><use href="#p0" x="939" y="395"/><use href="#pcm" x="945" y="395"/><use href="#p0" x="949" y="395"/><use href="#p0" x="955" y="395"/><use href="#p1" x="961" y="395"/><use href="#pda" x="933" y="414"/><use href="#p0" x="939" y="414"/><use href="#pcm" x="945" y="414"/><use href="#p0" x="949" y="414"/><use href="#p0" x="955" y="414"/><use href="#p4" x="961" y="414"/><use href="#pda" x="933" y="433"/><use href="#p0" x="939" y="433"/><use href="#pcm" x="945" y="433"/><use href="#p0" x="949" y="433"/><use href="#p2" x="955" y="433"/><use href="#p6" x="961" y="433"/></g></svg>
</body></html>
